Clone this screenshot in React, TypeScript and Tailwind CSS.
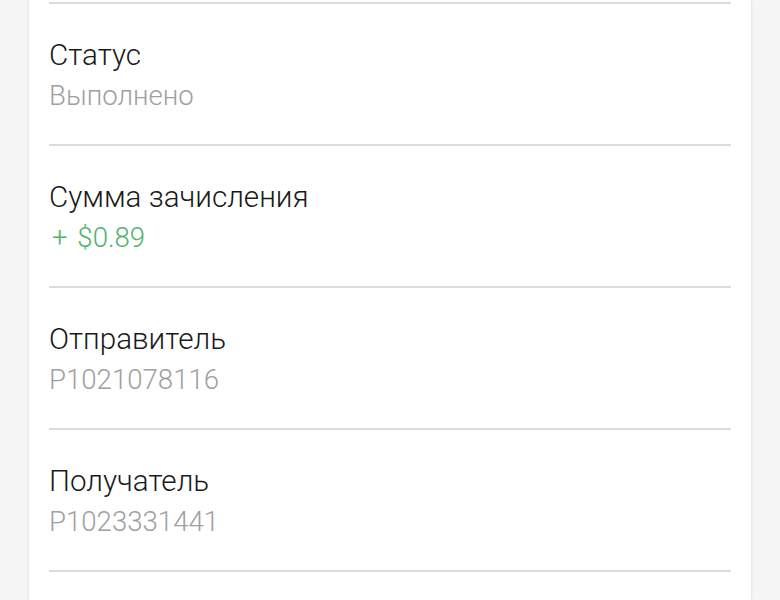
import React from 'react';

const rows = [
  { label: 'Статус', value: 'Выполнено', tone: 'text-[#a0a0a0]' },
  { label: 'Сумма зачисления', value: '+ $0.89', tone: 'text-[#52b36c]', amount: true },
  { label: 'Отправитель', value: 'P1021078116', tone: 'text-[#a0a0a0]' },
  { label: 'Получатель', value: 'P1023331441', tone: 'text-[#a0a0a0]' },
];

export default function App() {
  return (
    <div className="h-[600px] overflow-hidden bg-[#f5f5f5] px-[29px] font-['Roboto',sans-serif] font-light">
      <div className="h-full w-[722px] bg-white pt-[2px] px-[20px] shadow-[0_0_3px_rgba(0,0,0,0.12)]">
        {rows.map((row) => (
          <div key={row.label} className="h-[142px] border-t-2 border-[#dcdcdc] pt-[31px]">
            <div className="text-[29.6px] leading-[40px] text-[#1a1a1a]">{row.label}</div>
            <div className={`text-[27.6px] leading-[42px] ${row.tone}`}>
              {row.amount ? (
                <>
                  <span className="ml-[3px]">+</span> <span className="ml-[3px]">$0.89</span>
                </>
              ) : (
                row.value
              )}
            </div>
          </div>
        ))}
        <div className="border-t-2 border-[#dcdcdc]" />
      </div>
    </div>
  );
}
